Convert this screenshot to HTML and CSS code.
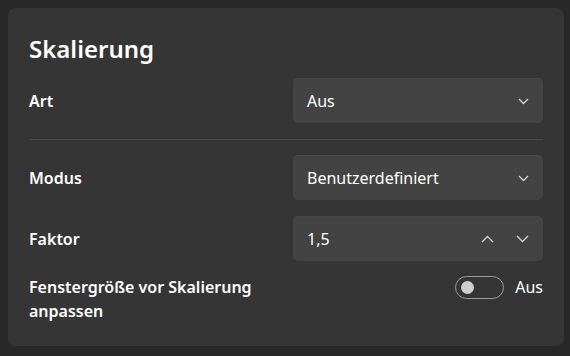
FILE: index.html
```html
<!DOCTYPE html>
<html lang="de">
<head>
<meta charset="utf-8">
<link rel="stylesheet" href="styles.css">
</head>
<body>
<div class="card">
  <h1 class="title">Skalierung</h1>
  <div class="row">
    <div class="label">Art</div>
    <div class="combo"><span>Aus</span>
      <svg class="chev" width="11" height="7" viewBox="0 0 11 7"><polyline points="1,1 5.5,5.5 10,1"/></svg>
    </div>
  </div>
  <div class="divider"></div>
  <div class="row">
    <div class="label">Modus</div>
    <div class="combo"><span>Benutzerdefiniert</span>
      <svg class="chev" width="11" height="7" viewBox="0 0 11 7"><polyline points="1,1 5.5,5.5 10,1"/></svg>
    </div>
  </div>
  <div class="row">
    <div class="label">Faktor</div>
    <div class="combo"><span>1,5</span>
      <div class="spin">
        <svg class="chev" width="13" height="8" viewBox="0 0 13 8"><polyline points="1,7 6.5,1.5 12,7"/></svg>
        <svg class="chev" width="13" height="8" viewBox="0 0 13 8"><polyline points="1,1 6.5,6.5 12,1"/></svg>
      </div>
    </div>
  </div>
  <div class="row toggle-row">
    <div class="label wrap">Fenstergröße vor Skalierung anpassen</div>
    <div class="toggle-group">
      <div class="toggle"><div class="knob"></div></div>
      <span class="toggle-text">Aus</span>
    </div>
  </div>
</div>
</body>
</html>
```
FILE: styles.css
```css
html, body {
  margin: 0;
  padding: 0;
  background: #282828;
  width: 570px;
  height: 356px;
  overflow: hidden;
}
body {
  padding: 8px 6px 10px 8px;
  box-sizing: border-box;
  font-family: "Noto Sans", "Open Sans", sans-serif;
  color: #ffffff;
}
.card {
  background: #353535;
  border-radius: 8px;
  height: 338px;
  box-sizing: border-box;
  padding: 24px 21px 0 21px;
  display: flex;
  flex-direction: column;
}
.title {
  margin: 0 0 12px 0;
  font-size: 24px;
  font-weight: 600;
  line-height: 34px;
}
.row {
  display: flex;
  align-items: center;
  justify-content: space-between;
}
.label {
  font-size: 16px;
  font-weight: 600;
  line-height: 24px;
}
.combo {
  width: 250px;
  height: 45px;
  box-sizing: border-box;
  background: #434343;
  border-radius: 5px;
  border-top: 1px solid #484848;
  display: flex;
  align-items: center;
  justify-content: space-between;
  padding: 0 14px 0 14px;
  font-size: 16px;
}
.chev polyline {
  fill: none;
  stroke: #d4d4d4;
  stroke-width: 1.3;
}
.spin {
  display: flex;
  align-items: center;
  gap: 22px;
}
.divider {
  height: 1px;
  background: #4a4a4a;
  margin: 16px 0 15px 0;
}
.row + .row {
  margin-top: 16px;
}
.toggle-row {
  align-items: flex-start;
}
.row.toggle-row {
  margin-top: 14px;
}
.wrap {
  width: 240px;
}
.toggle-group {
  display: flex;
  align-items: center;
  gap: 11px;
}
.toggle {
  width: 49px;
  height: 23px;
  box-sizing: border-box;
  border: 1px solid #9b9b9b;
  border-radius: 12px;
  display: flex;
  align-items: center;
  padding-left: 5px;
}
.knob {
  width: 13px;
  height: 13px;
  border-radius: 50%;
  background: #cecece;
}
.toggle-text {
  font-size: 16px;
  line-height: 24px;
}
```
